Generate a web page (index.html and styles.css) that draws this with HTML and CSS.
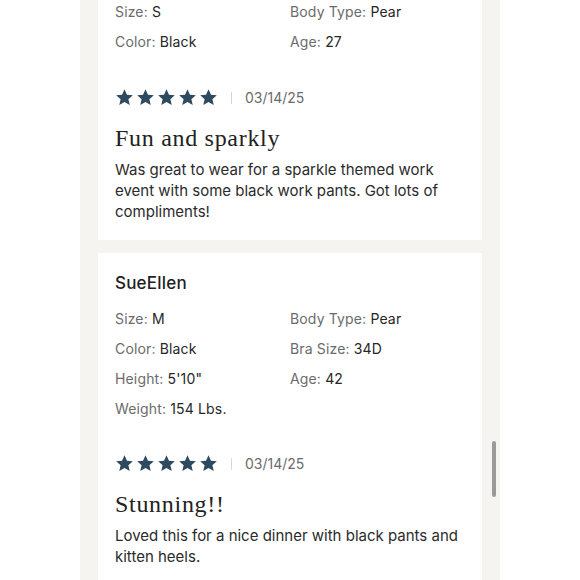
FILE: index.html
```html
<!DOCTYPE html>
<html>
<head>
<meta charset="utf-8">
<link rel="stylesheet" href="styles.css">
</head>
<body>
<div class="column">
  <div class="card card-first">
    <div class="details">
      <div class="item"><span class="label">Size:</span> <span class="value">S</span></div>
      <div class="item"><span class="label">Body Type:</span> <span class="value">Pear</span></div>
      <div class="item"><span class="label">Color:</span> <span class="value">Black</span></div>
      <div class="item"><span class="label">Age:</span> <span class="value">27</span></div>
    </div>
    <div class="rating">
      <div class="stars">
        <svg class="star" viewBox="0 0 24 24"><path d="M12 1.5l3.1 6.9 7.4.7-5.6 5 1.7 7.4L12 17.6l-6.6 3.9 1.7-7.4-5.6-5 7.4-.7z"/></svg>
        <svg class="star" viewBox="0 0 24 24"><path d="M12 1.5l3.1 6.9 7.4.7-5.6 5 1.7 7.4L12 17.6l-6.6 3.9 1.7-7.4-5.6-5 7.4-.7z"/></svg>
        <svg class="star" viewBox="0 0 24 24"><path d="M12 1.5l3.1 6.9 7.4.7-5.6 5 1.7 7.4L12 17.6l-6.6 3.9 1.7-7.4-5.6-5 7.4-.7z"/></svg>
        <svg class="star" viewBox="0 0 24 24"><path d="M12 1.5l3.1 6.9 7.4.7-5.6 5 1.7 7.4L12 17.6l-6.6 3.9 1.7-7.4-5.6-5 7.4-.7z"/></svg>
        <svg class="star" viewBox="0 0 24 24"><path d="M12 1.5l3.1 6.9 7.4.7-5.6 5 1.7 7.4L12 17.6l-6.6 3.9 1.7-7.4-5.6-5 7.4-.7z"/></svg>
      </div>
      <span class="sep"></span>
      <span class="date">03/14/25</span>
    </div>
    <h3 class="title">Fun and sparkly</h3>
    <p class="body">Was great to wear for a sparkle themed work event with some black work pants. Got lots of compliments!</p>
  </div>

  <div class="card card-second">
    <div class="name">SueEllen</div>
    <div class="details">
      <div class="item"><span class="label">Size:</span> <span class="value">M</span></div>
      <div class="item"><span class="label">Body Type:</span> <span class="value">Pear</span></div>
      <div class="item"><span class="label">Color:</span> <span class="value">Black</span></div>
      <div class="item"><span class="label">Bra Size:</span> <span class="value">34D</span></div>
      <div class="item"><span class="label">Height:</span> <span class="value">5'10"</span></div>
      <div class="item"><span class="label">Age:</span> <span class="value">42</span></div>
      <div class="item"><span class="label">Weight:</span> <span class="value">154 Lbs.</span></div>
    </div>
    <div class="rating rating-second">
      <div class="stars">
        <svg class="star" viewBox="0 0 24 24"><path d="M12 1.5l3.1 6.9 7.4.7-5.6 5 1.7 7.4L12 17.6l-6.6 3.9 1.7-7.4-5.6-5 7.4-.7z"/></svg>
        <svg class="star" viewBox="0 0 24 24"><path d="M12 1.5l3.1 6.9 7.4.7-5.6 5 1.7 7.4L12 17.6l-6.6 3.9 1.7-7.4-5.6-5 7.4-.7z"/></svg>
        <svg class="star" viewBox="0 0 24 24"><path d="M12 1.5l3.1 6.9 7.4.7-5.6 5 1.7 7.4L12 17.6l-6.6 3.9 1.7-7.4-5.6-5 7.4-.7z"/></svg>
        <svg class="star" viewBox="0 0 24 24"><path d="M12 1.5l3.1 6.9 7.4.7-5.6 5 1.7 7.4L12 17.6l-6.6 3.9 1.7-7.4-5.6-5 7.4-.7z"/></svg>
        <svg class="star" viewBox="0 0 24 24"><path d="M12 1.5l3.1 6.9 7.4.7-5.6 5 1.7 7.4L12 17.6l-6.6 3.9 1.7-7.4-5.6-5 7.4-.7z"/></svg>
      </div>
      <span class="sep"></span>
      <span class="date">03/14/25</span>
    </div>
    <h3 class="title">Stunning!!</h3>
    <p class="body">Loved this for a nice dinner with black pants and kitten heels.</p>
  </div>
  <div class="scroll-thumb"></div>
</div>
</body>
</html>
```

FILE: styles.css
```css
html, body {
  margin: 0;
  padding: 0;
  background: #ffffff;
  height: 580px;
  overflow: hidden;
}

.column {
  position: relative;
  margin-left: 80px;
  width: 420px;
  height: 580px;
  box-sizing: border-box;
  padding: 0 18px;
  background: #f6f4f0;
  font-family: "Inter", "Liberation Sans", sans-serif;
  font-size: 14px;
  color: #2b2b2b;
}

.card {
  background: #ffffff;
  padding: 18px 17px 18px;
  margin-bottom: 13px;
}

.card-first {
  padding-top: 2px;
}

.card-second {
  padding-top: 18px;
}

.name {
  font-size: 17px;
  line-height: 24px;
  font-weight: 500;
  color: #1f1f1f;
  margin-bottom: 14px;
  letter-spacing: 0.2px;
}

.details {
  display: grid;
  grid-template-columns: 175px 175px;
  row-gap: 10px;
  line-height: 20px;
  letter-spacing: 0.15px;
}

.label {
  color: #6b6b6b;
}

.value {
  color: #262626;
}

.rating {
  display: flex;
  align-items: center;
  margin-top: 36px;
  height: 19px;
}

.rating-second {
  margin-top: 35px;
}

.stars {
  display: flex;
  gap: 2px;
}

.star {
  width: 19px;
  height: 19px;
  fill: #2e4a60;
}

.sep {
  width: 1px;
  height: 12px;
  background: #d6d6d6;
  margin: 0 13px 0 13px;
}

.date {
  color: #6b6b6b;
  font-size: 14px;
}

.title {
  margin: 17px 0 0;
  font-family: "Liberation Serif", serif;
  font-weight: 400;
  font-size: 24px;
  line-height: 28px;
  letter-spacing: 0.7px;
  color: #222222;
}

.body {
  margin: 7px 0 0;
  font-size: 15px;
  line-height: 21px;
  color: #2b2b2b;
}

.scroll-thumb {
  position: absolute;
  left: 412px;
  top: 441px;
  width: 4px;
  height: 56px;
  border-radius: 2px;
  background: #9a9a9a;
}
```
